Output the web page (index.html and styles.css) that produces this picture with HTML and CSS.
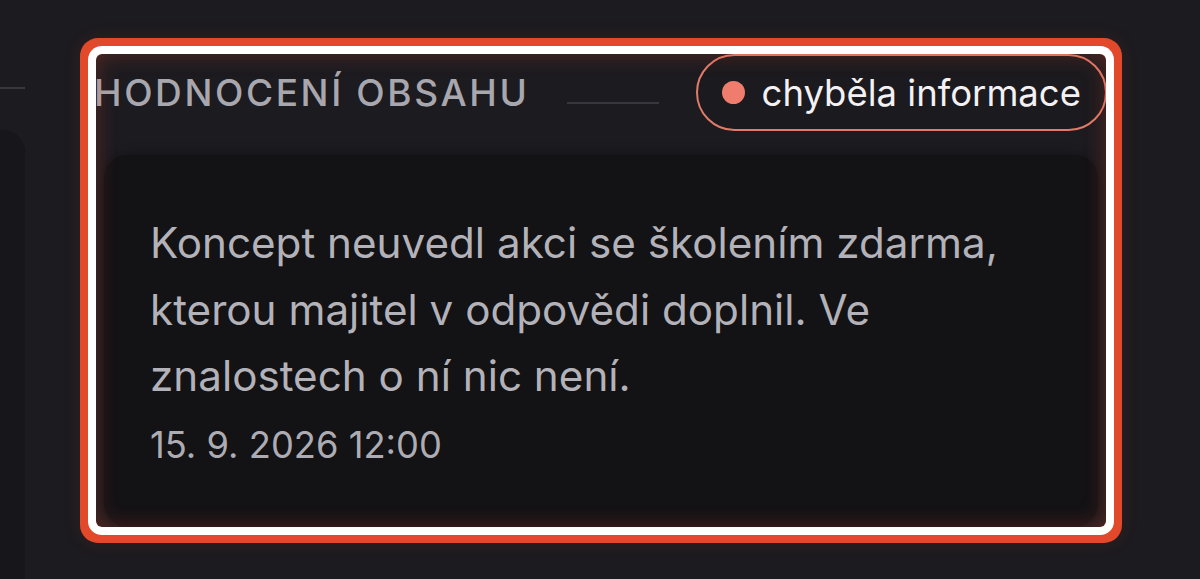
FILE: index.html
```html
<!DOCTYPE html>
<html lang="cs">
<head>
<meta charset="utf-8">
<title>Hodnocení obsahu</title>
<link rel="stylesheet" href="styles.css">
</head>
<body>
<div class="page">
  <aside class="side">
    <div class="side-rule"></div>
    <div class="side-card"></div>
  </aside>
  <section class="panel">
    <header class="panel-head">
      <h2 class="panel-label">HODNOCENÍ OBSAHU</h2>
      <span class="panel-rule"></span>
      <span class="badge"><span class="badge-dot"></span>chyběla informace</span>
    </header>
    <div class="note">
      <p class="note-text">Koncept neuvedl akci se školením zdarma, kterou majitel v odpovědi doplnil. Ve znalostech o ní nic není.</p>
      <div class="note-date">15. 9. 2026 12:00</div>
    </div>
    <div class="highlight"></div>
  </section>
</div>
</body>
</html>
```

FILE: styles.css
```css
html, body {
  margin: 0;
  padding: 0;
  background: #1c1b20;
  font-family: Inter, "Noto Sans", "Liberation Sans", sans-serif;
  overflow: hidden;
}

.page {
  display: flex;
  gap: 71px;
  padding-top: 54px;
  min-height: 100vh;
  box-sizing: border-box;
}

.side {
  width: 300px;
  margin-left: -275px;
  display: flex;
  flex-direction: column;
}

.side-rule {
  height: 2px;
  margin-top: 33px;
  background: #38373e;
}

.side-card {
  margin-top: 41px;
  flex: 1;
  background: #17161a;
  border-radius: 22px 22px 0 0;
}

.panel {
  position: relative;
  width: 1010px;
  height: 473px;
  align-self: flex-start;
  display: flex;
  flex-direction: column;
  border-radius: 6px;
}

.panel-head {
  display: flex;
  align-items: center;
  gap: 37px;
  height: 77px;
}

.panel-label {
  margin: 0 0 0 -2px;
  font-size: 37px;
  font-weight: 500;
  letter-spacing: 2.6px;
  color: #a8a7ae;
  white-space: nowrap;
}

.panel-rule {
  flex: 1;
  height: 2px;
  margin-top: 20px;
  background: #38373e;
}

.badge {
  height: 77px;
  box-sizing: border-box;
  display: flex;
  align-items: center;
  gap: 17px;
  padding: 0 24px 0 24px;
  margin-right: -1px;
  border: 2px solid #e27b69;
  border-radius: 40px;
  background: #1b1a1e;
  color: #f3f1f3;
  font-size: 36.5px;
  white-space: nowrap;
}

.badge-dot {
  width: 23px;
  height: 23px;
  border-radius: 50%;
  background: #ee7d6d;
  flex: none;
}

.note {
  flex: 1;
  margin: 24px 8px 0;
  padding: 55px 46px 0;
  background: #131215;
  border-radius: 24px;
  box-shadow: 0 0 12px rgba(0, 0, 0, 0.35);
}

.note-text {
  margin: 0;
  font-size: 42.2px;
  line-height: 66.5px;
  color: #b3b2b9;
}

.note-date {
  margin-top: 9px;
  font-size: 36.3px;
  line-height: 52px;
  color: #adacb3;
}

.highlight {
  position: absolute;
  inset: 0;
  border-radius: 6px;
  pointer-events: none;
  box-shadow:
    inset 0 0 22px rgba(214, 72, 44, 0.32),
    0 0 0 8px #ffffff,
    0 0 0 16px #e2492a,
    0 0 18px 16px rgba(226, 73, 42, 0.12);
}
```
